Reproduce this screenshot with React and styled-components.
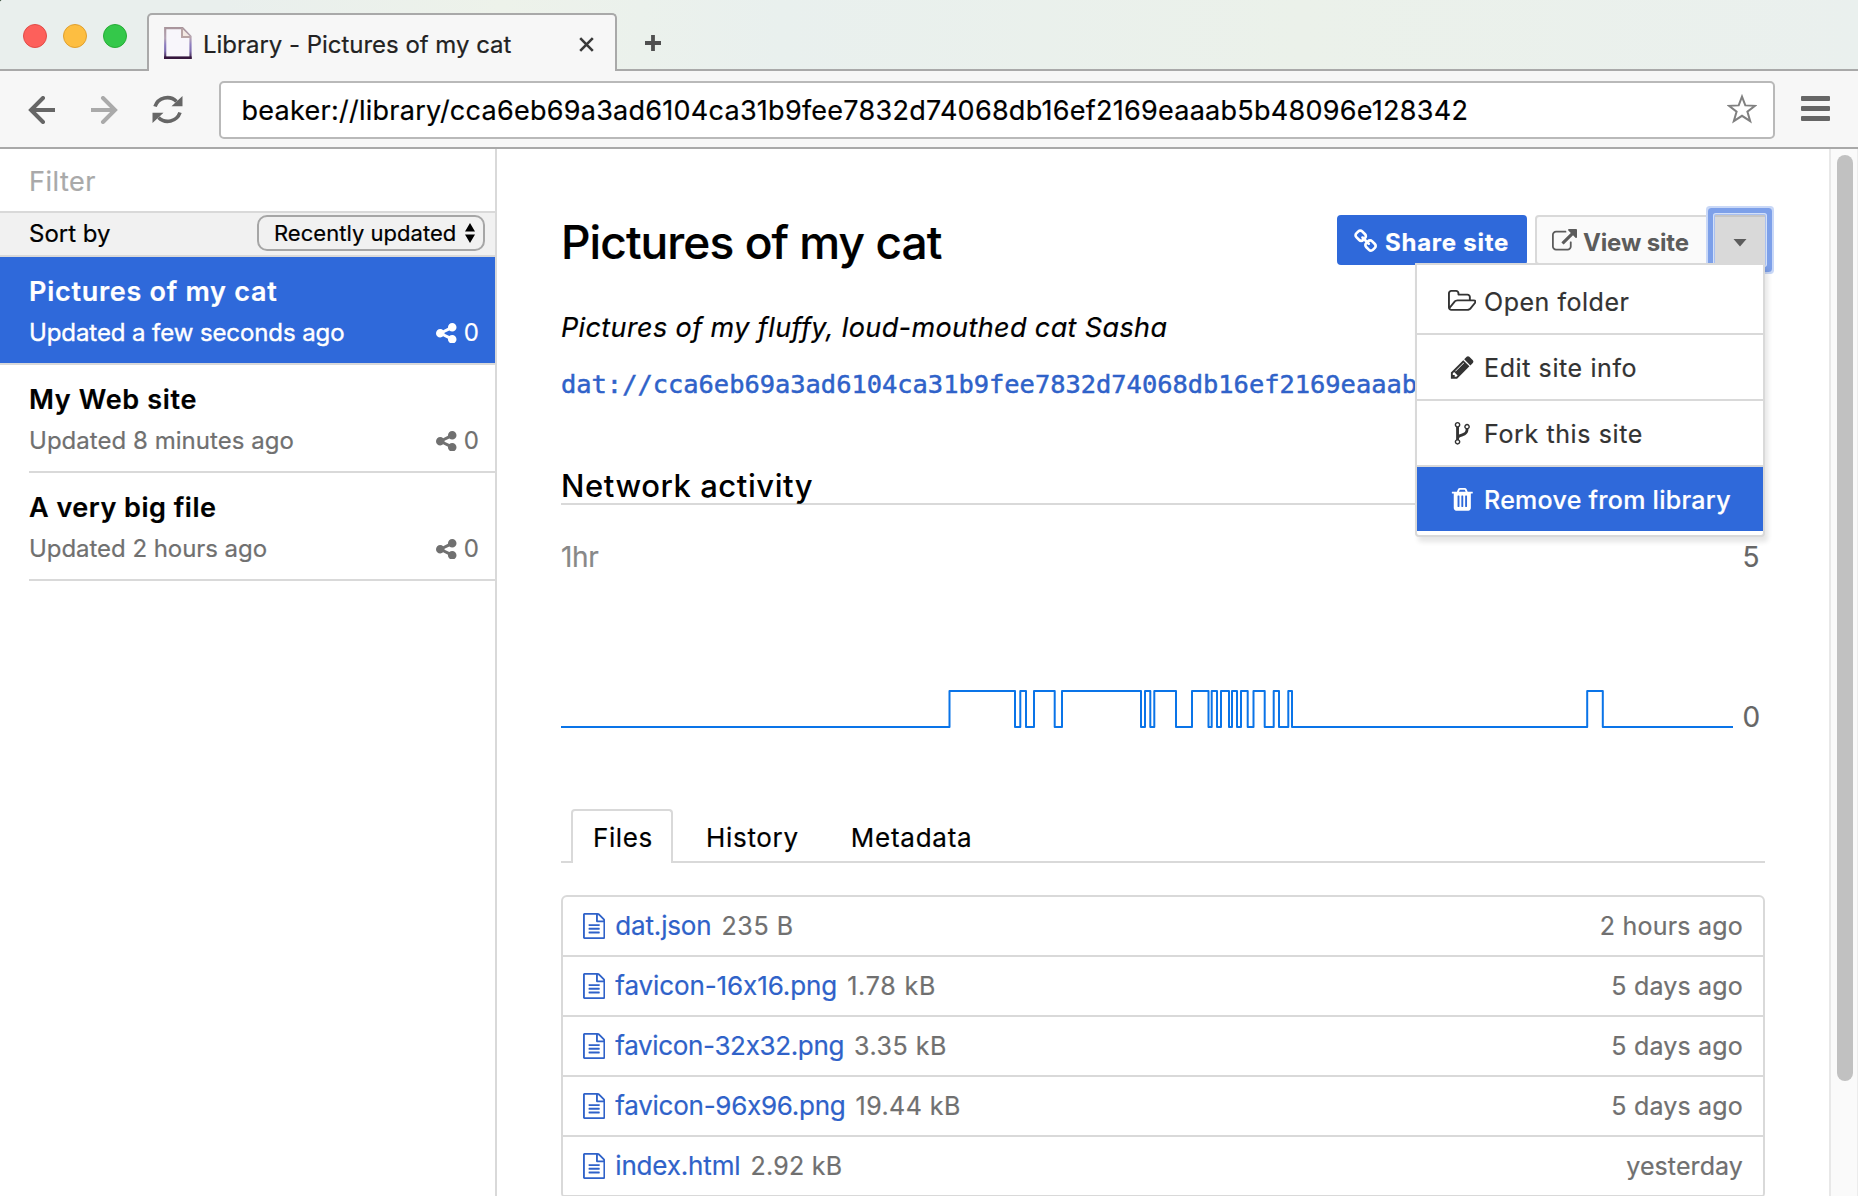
import React from 'react';
import styled, { createGlobalStyle } from 'styled-components';

const BLUE = '#2f69da';
const LINE = '#d9d9d9';

const GlobalStyle = createGlobalStyle`
  * { box-sizing: border-box; }
  html, body { margin: 0; padding: 0; background: #2c4530; overflow: hidden; }
  body { font-family: Inter, "Liberation Sans", sans-serif; color: #000; }
`;

const Window = styled.div`
  width: 1858px;
  height: 1196px;
  display: flex;
  flex-direction: column;
  overflow: hidden;
  background: #fff;
  border-top-left-radius: 3px;
`;

const Text = styled.span`
  font-size: ${(p) => p.$size}px;
  font-weight: ${(p) => p.$weight || 400};
  line-height: ${(p) => p.$lh || 32}px;
  letter-spacing: ${(p) => p.$ls || 0}px;
  color: ${(p) => p.$color || 'inherit'};
  -webkit-text-stroke: ${(p) => p.$stroke ?? 0.2}px currentColor;
  white-space: nowrap;
`;

/* ---------- window chrome ---------- */

const TitleBar = styled.header`
  flex: none;
  height: 71px;
  display: flex;
  border-bottom: 2px solid #a9a9a9;
  background: linear-gradient(90deg, #e9efed 0%, #e9efed 12%, #edf2ea 27%, #e9f0ee 42%, #ebf1ea 70%, #eaf0ee 100%);
`;

const Lights = styled.div`
  width: 147px;
  display: flex;
  gap: 16px;
  padding: 24px 0 0 23px;
`;

const Light = styled.i`
  width: 24px;
  height: 24px;
  border-radius: 50%;
  background: ${(p) => p.$fill};
  border: 1px solid ${(p) => p.$edge};
`;

const BrowserTab = styled.div`
  width: 470px;
  height: 58px;
  margin-top: 13px;
  padding: 0 21px 0 15px;
  display: flex;
  align-items: center;
  background: #f7f7f7;
  border: 2px solid #a9a9a9;
  border-bottom: 0;
  border-radius: 5px 5px 0 0;
  color: #222;

  ${Text} { margin-left: 11px; padding-top: 3px; }
  svg:last-child { margin: 2px 0 0 auto; }
`;

const NewTab = styled.div`
  padding: 35px 0 0 28px;
`;

const Toolbar = styled.nav`
  flex: none;
  height: 78px;
  display: flex;
  align-items: center;
  background: #f7f7f7;
  border-bottom: 2px solid #a9a9a9;
`;

const NavButtons = styled.div`
  width: 219px;
  display: flex;
  align-items: center;
  padding: 1px 0 0 28px;
  gap: 35px;

  svg + svg { margin-left: -1px; }
`;

const AddressBar = styled.div`
  width: 1556px;
  height: 58px;
  display: flex;
  align-items: center;
  justify-content: space-between;
  padding: 0 16px 0 20.5px;
  background: #fff;
  border: 2px solid #b9b9b9;
  border-radius: 5px;
  margin-top: 1px;

  ${Text} { padding-top: 3px; }
  svg { margin-top: -2px; }
`;

const MenuButton = styled.div`
  width: 29px;
  margin: -1px 0 0 25.5px;
  display: flex;
  flex-direction: column;
  gap: 5px;
`;

const MenuBar = styled.i`
  height: 5px;
  border-radius: 1px;
  background: #666;
`;

/* ---------- layout ---------- */

const Body = styled.div`
  flex: 1;
  min-height: 0;
  display: flex;
`;

const Sidebar = styled.aside`
  width: 497px;
  flex: none;
  border-right: 2px solid ${LINE};
`;

const FilterRow = styled.div`
  height: 64px;
  padding: 17px 0 0 29px;
  border-bottom: 2px solid ${LINE};
`;

const SortRow = styled.div`
  height: 44px;
  display: flex;
  justify-content: space-between;
  padding: 2px 10px 0 29px;
  background: #f1f1f1;
  border-bottom: 2px solid ${LINE};
`;

const Select = styled.div`
  width: 228px;
  height: 36px;
  display: flex;
  align-items: center;
  justify-content: space-between;
  padding: 0 8px 0 15px;
  border: 2px solid #a6a6a6;
  border-radius: 10px;
`;

const Item = styled.div`
  height: 108px;
  margin-left: ${(p) => (p.$active ? 0 : 29)}px;
  padding: 18px 16px 0 ${(p) => (p.$active ? 29 : 0)}px;
  display: flex;
  flex-direction: column;
  gap: 8px;
  border-bottom: 2px solid ${LINE};
  background: ${(p) => (p.$active ? BLUE : 'none')};
  background-clip: padding-box;
  color: ${(p) => (p.$active ? '#fff' : '#000')};
`;

const ItemMeta = styled.div`
  display: flex;
  align-items: center;
  color: ${(p) => (p.$active ? '#fff' : '#707070')};

  svg { margin-left: auto; margin-right: 7px; }
`;

const Main = styled.main`
  width: 1332px;
  padding: 66px 64px 0 64px;
  overflow: hidden;
`;

const ScrollTrack = styled.div`
  flex: 1;
  padding: 6px 0 0 6px;
  border-left: 2px solid #e8e8e8;
  border-right: 1px solid #ececec;
  background: #fafafa;
`;

const ScrollThumb = styled.div`
  width: 16px;
  height: 926px;
  border-radius: 8px;
  background: #c1c1c1;
`;

/* ---------- page header ---------- */

const PageHeader = styled.div`
  position: relative;
  height: 50px;
  display: flex;
  justify-content: space-between;
`;

const Title = styled(Text).attrs({ as: 'h1' })`
  margin: 0;
`;

const Actions = styled.div`
  display: flex;
`;

const Button = styled.div`
  height: 50px;
  width: ${(p) => p.$width}px;
  margin-right: ${(p) => p.$gap || 0}px;
  display: flex;
  align-items: center;
  gap: 6px;
  padding: 2px 0 0 15px;
  border: 2px solid ${(p) => (p.$primary ? BLUE : LINE)};
  border-radius: 4px;
  background: ${(p) => (p.$primary ? BLUE : '#fafafa')};
  color: ${(p) => (p.$primary ? '#fff' : '#5c5c5c')};

  ${Text} { padding-top: 3px; }
`;

const CaretButton = styled.div`
  width: 50px;
  height: 50px;
  display: flex;
  align-items: center;
  justify-content: center;
  padding-top: 4px;
  background: #d9d9d9;
  border-top: 2px solid #c6c6c6;
  box-shadow: 0 0 0 1px #a9c0f0, 0 0 0 2px #d3e0f8, 0 0 0 7px #7da0e9, 0 0 0 9px #c9d8f7;
  border-radius: 1px;
`;

const Dropdown = styled.div`
  position: absolute;
  top: 48px;
  right: 0;
  width: 350px;
  padding: 4px 0;
  background: #fff;
  border: 2px solid ${LINE};
  border-radius: 0 0 4px 4px;
  box-shadow: 3px 5px 5px rgba(0, 0, 0, 0.1);
`;

const DropdownItem = styled.div`
  height: ${(p) => (p.$last ? 64 : 66)}px;
  display: flex;
  align-items: center;
  padding: 1px 0 0 28px;
  border-bottom: ${(p) => (p.$last ? 0 : 2)}px solid ${LINE};
  background: ${(p) => (p.$last ? BLUE : '#fff')};
  color: ${(p) => (p.$last ? '#fff' : '#333')};
`;

const IconCell = styled.span`
  width: 34px;
  margin-right: 5px;
  display: flex;
  justify-content: center;
`;

const Description = styled.p`
  margin: 43px 0 0;
  font-size: 27px;
  font-style: italic;
  line-height: 40px;
  letter-spacing: 0.38px;
  -webkit-text-stroke: 0.2px currentColor;
`;

const DatLink = styled.a`
  display: block;
  width: 854px;
  overflow: hidden;
  margin-top: 16px;
  font-family: "DejaVu Sans Mono", monospace;
  font-size: 25.4px;
  line-height: 40px;
  color: #2f62c9;
  -webkit-text-stroke: 0.5px currentColor;
  white-space: nowrap;
`;

const SectionTitle = styled.h2`
  margin: 63px 0 32px;
  height: 38px;
  font-size: 31px;
  font-weight: 500;
  line-height: 38px;
  letter-spacing: 0.56px;
  border-bottom: 2px solid ${LINE};
`;

/* ---------- chart ---------- */

const Chart = styled.div`
  height: 200px;
  display: flex;
`;

const Plot = styled.div`
  width: 1172px;
  display: flex;
  flex-direction: column;
`;

const Axis = styled.div`
  padding-left: 9.5px;
  display: flex;
  flex-direction: column;
  justify-content: space-between;
`;

/* ---------- tabs and files ---------- */

const Tabs = styled.div`
  height: 54px;
  margin-top: 72px;
  padding-left: 10px;
  display: flex;
  align-items: flex-start;
  border-bottom: 2px solid ${LINE};
`;

const Tab = styled.div`
  height: 54px;
  display: flex;
  align-items: center;
  padding: ${(p) => (p.$active ? '2px 19px 0 20px' : '4px 26px 0')};
  width: ${(p) => (p.$active ? '102px' : 'auto')};
  margin-right: ${(p) => (p.$active ? 7 : 0)}px;
  border: ${(p) => (p.$active ? `2px solid ${LINE}` : 0)};
  border-bottom: 0;
  border-radius: 4px 4px 0 0;
  background: ${(p) => (p.$active ? '#fff' : 'none')};
`;

const FileList = styled.div`
  margin-top: 32px;
  border: 2px solid ${LINE};
  border-radius: 6px;
`;

const FileRow = styled.div`
  height: 60px;
  display: flex;
  align-items: center;
  padding: 0 20px 0 20px;
  border-bottom: 2px solid ${LINE};
  color: #707070;

  svg { margin-right: 10px; color: #2f62c9; }
  ${Text}:nth-of-type(2) { margin-left: 10px; }
  ${Text}:last-child { margin-left: auto; }
`;

/* ---------- icons ---------- */

const GLYPHS = {
  link: ['0 0 1792 1792', 'M1456 1216q0-40-28-68l-208-208q-28-28-68-28-42 0-72 32 3 3 19 18.5t21.5 21.5 15 19 13 25.5 3.5 27.5q0 40-28 68t-68 28q-15 0-27.5-3.5t-25.5-13-19-15-21.5-21.5-18.5-19q-33 31-33 73 0 40 28 68l206 207q27 27 68 27 40 0 68-26l147-146q28-28 28-67zm-703-705q0-40-28-68l-206-207q-28-28-68-28-39 0-68 27l-147 146q-28 28-28 67 0 40 28 68l208 208q27 27 68 27 42 0 72-31-3-3-19-18.5t-21.5-21.5-15-19-13-25.5-3.5-27.5q0-40 28-68t68-28q15 0 27.5 3.5t25.5 13 19 15 21.5 21.5 18.5 19q33-31 33-73zm895 705q0 120-85 203l-147 146q-83 83-203 83-121 0-204-85l-206-207q-83-83-83-203 0-123 88-209l-88-88q-86 88-208 88-120 0-204-84l-208-208q-84-84-84-204t85-203l147-146q83-83 203-83 121 0 204 85l206 207q83 83 83 203 0 123-88 209l88 88q86-88 208-88 120 0 204 84l208 208q84 84 84 204z'],
  external: ['0 0 1792 1792', 'M1408 928v320q0 119-84.5 203.5t-203.5 84.5h-832q-119 0-203.5-84.5t-84.5-203.5v-832q0-119 84.5-203.5t203.5-84.5h704q14 0 23 9t9 23v64q0 14-9 23t-23 9h-704q-66 0-113 47t-47 113v832q0 66 47 113t113 47h832q66 0 113-47t47-113v-320q0-14 9-23t23-9h64q14 0 23 9t9 23zm384-864v512q0 26-19 45t-45 19-45-19l-176-176-652 652q-10 10-23 10t-23-10l-114-114q-10-10-10-23t10-23l652-652-176-176q-19-19-19-45t19-45 45-19h512q26 0 45 19t19 45z'],
  folder: ['-64 0 1920 1792', 'M1717 931q0-35-53-35h-1088q-40 0-85.5 21.5t-71.5 52.5l-294 363q-18 24-18 40 0 35 53 35h1088q40 0 86-22t71-53l294-363q18-22 18-39zm-1141-163h768v-160q0-40-28-68t-68-28h-576q-40 0-68-28t-28-68v-64q0-40-28-68t-68-28h-320q-40 0-68 28t-28 68v853l256-315q44-53 116-87.5t140-34.5zm1269 163q0 62-46 120l-295 363q-43 53-116 87.5t-140 34.5h-1088q-92 0-158-66t-66-158v-960q0-92 66-158t158-66h320q92 0 158 66t66 158v32h544q92 0 158 66t66 158v160h192q54 0 99 24.5t67 70.5q15 32 15 68z'],
  pencil: ['0 0 1792 1792', 'M491 1536l91-91-235-235-91 91v107h128v128h107zm523-928q0-22-22-22-10 0-17 7l-542 542q-7 7-7 17 0 22 22 22 10 0 17-7l542-542q7-7 7-17zm-54-192l416 416-832 832h-416v-416zm683 96q0 53-37 90l-166 166-416-416 166-165q36-38 90-38 53 0 91 38l235 234q37 39 37 91z'],
  fork: ['0 0 1792 1792', 'M672 1472q0-40-28-68t-68-28-68 28-28 68 28 68 68 28 68-28 28-68zm0-1152q0-40-28-68t-68-28-68 28-28 68 28 68 68 28 68-28 28-68zm640 128q0-40-28-68t-68-28-68 28-28 68 28 68 68 28 68-28 28-68zm96 0q0 52-26 96.5t-70 69.5q-2 287-226 414-68 38-203 81-128 40-169.5 71t-41.5 100v26q44 25 70 69.5t26 96.5q0 80-56 136t-136 56-136-56-56-136q0-52 26-96.5t70-69.5v-820q-44-25-70-69.5t-26-96.5q0-80 56-136t136-56 136 56 56 136q0 52-26 96.5t-70 69.5v497q54-26 154-57 55-17 87.5-29.5t70.5-31 59-39.5 40.5-51 28-69.5 8.5-91.5q-44-25-70-69.5t-26-96.5q0-80 56-136t136-56 136 56 56 136z'],
  trash: ['0 0 1792 1792', 'M704 1376v-704q0-14-9-23t-23-9h-64q-14 0-23 9t-9 23v704q0 14 9 23t23 9h64q14 0 23-9t9-23zm256 0v-704q0-14-9-23t-23-9h-64q-14 0-23 9t-9 23v704q0 14 9 23t23 9h64q14 0 23-9t9-23zm256 0v-704q0-14-9-23t-23-9h-64q-14 0-23 9t-9 23v704q0 14 9 23t23 9h64q14 0 23-9t9-23zm-544-992h448l-48-117q-7-9-17-11h-317q-10 2-17 11zm928 32v64q0 14-9 23t-23 9h-96v948q0 83-47 143.5t-113 60.5h-832q-66 0-113-58.5t-47-141.5v-952h-96q-14 0-23-9t-9-23v-64q0-14 9-23t23-9h309l70-167q15-37 54-63t79-26h320q40 0 79 26t54 63l70 167h309q14 0 23 9t9 23z'],
  share: ['128 128 1536 1536', 'M1344 1024q133 0 226.5 93.5t93.5 226.5-93.5 226.5-226.5 93.5-226.5-93.5-93.5-226.5q0-12 2-34l-360-180q-92 86-218 86-133 0-226.5-93.5t-93.5-226.5 93.5-226.5 226.5-93.5q126 0 218 86l360-180q-2-22-2-34 0-133 93.5-226.5t226.5-93.5 226.5 93.5 93.5 226.5-93.5 226.5-226.5 93.5q-126 0-218-86l-360 180q2 22 2 34t-2 34l360 180q92-86 218-86z'],
  file: ['128 0 1536 1792', 'M1596 380q28 28 48 76t20 88v1152q0 40-28 68t-68 28h-1344q-40 0-68-28t-28-68v-1600q0-40 28-68t68-28h896q40 0 88 20t76 48zm-444-244v376h376q-10-29-22-41l-313-313q-12-12-41-22zm384 1528v-1024h-416q-40 0-68-28t-28-68v-416h-768v1536h1280zm-1024-864q0-14 9-23t23-9h704q14 0 23 9t9 23v64q0 14-9 23t-23 9h-704q-14 0-23-9t-9-23v-64zm736 224q14 0 23 9t9 23v64q0 14-9 23t-23 9h-704q-14 0-23-9t-9-23v-64q0-14 9-23t23-9h704zm0 256q14 0 23 9t9 23v64q0 14-9 23t-23 9h-704q-14 0-23-9t-9-23v-64q0-14 9-23t23-9h704z'],
};

function Glyph({ name, w, h }) {
  const [box, d] = GLYPHS[name];
  return (
    <svg width={w} height={h || w} viewBox={box} fill="currentColor">
      <path d={d} />
    </svg>
  );
}

function Arrow({ color, flip }) {
  return (
    <svg width="28" height="28" viewBox="0 0 28 28" fill="none" stroke={color} strokeWidth="4">
      <g transform={flip ? 'matrix(-1 0 0 1 28 0)' : undefined}>
        <path d="M2.5 14H27" />
        <path d="M15 2L3 14l12 12" strokeLinecap="round" />
      </g>
    </svg>
  );
}

function PageIcon() {
  return (
    <svg width="28" height="32" viewBox="0 0 28 32">
      <defs>
        <linearGradient id="pageEdge" gradientUnits="userSpaceOnUse" x1="0" y1="0" x2="0" y2="32">
          <stop offset="0" stopColor="#a8949a" />
          <stop offset="0.35" stopColor="#b4a3b4" />
          <stop offset="0.55" stopColor="#8f7fc0" />
          <stop offset="0.75" stopColor="#7d6cae" />
          <stop offset="1" stopColor="#35163c" />
        </linearGradient>
      </defs>
      <path d="M1.2 1.2H18.5L26.5 9.5V30.8H1.2Z" fill="#f8f6fb" stroke="url(#pageEdge)" strokeWidth="2.2" />
      <path d="M0 30.8H27.6" stroke="#35163c" strokeWidth="2.4" />
      <path d="M18 1.5V10H26.5" fill="#f3e9e2" stroke="#b9a5a5" strokeWidth="2" />
    </svg>
  );
}

/* ---------- data ---------- */

const SITES = [
  { title: 'Pictures of my cat', tls: 0.73, sub: 'Updated a few seconds ago', sls: -0.09, active: true },
  { title: 'My Web site', tls: 0.67, sub: 'Updated 8 minutes ago', sls: 0.03 },
  { title: 'A very big file', tls: 0.5, sub: 'Updated 2 hours ago', sls: -0.05 },
];

const MENU = [
  { icon: 'folder', w: 28.5, h: 26.6, label: 'Open folder', ls: 0.53 },
  { icon: 'pencil', w: 26.6, label: 'Edit site info', ls: 0.6 },
  { icon: 'fork', w: 26.6, label: 'Fork this site', ls: 0.62 },
  { icon: 'trash', w: 26.6, label: 'Remove from library', ls: 0.28, last: true },
];

const FILES = [
  ['dat.json', -0.16, '235 B', 0.6, '2 hours ago', 0.21],
  ['favicon-16x16.png', -0.1, '1.78 kB', 0.8, '5 days ago', 0.18],
  ['favicon-32x32.png', -0.34, '3.35 kB', 0.53, '5 days ago', 0.18],
  ['favicon-96x96.png', -0.26, '19.44 kB', 0.45, '5 days ago', 0.18],
  ['index.html', -0.17, '2.92 kB', 0.25, 'yesterday', 0.1],
];

const EDGES = [
  388.5, 454, 459.3, 465, 473, 493.7, 501, 580, 584, 589.3, 593.3, 615, 631, 647.5, 650.7, 656,
  660, 668, 671, 676, 680, 686.7, 692.5, 703.7, 712.7, 718, 727.3, 731, 1026.2, 1041.8,
];

const KEY = 'cca6eb69a3ad6104ca31b9fee7832d74068db16ef2169eaaab5b48096e128342';

function activityPath() {
  let high = false;
  let d = 'M0 150';
  EDGES.forEach((x) => {
    high = !high;
    d += `H${x}V${high ? 114 : 150}`;
  });
  return `${d}H1172`;
}

export default function App() {
  return (
    <Window>
      <GlobalStyle />
      <TitleBar>
        <Lights>
          <Light $fill="#fd605b" $edge="#e14b47" />
          <Light $fill="#fdbe41" $edge="#e0a02f" />
          <Light $fill="#34c84a" $edge="#27ac36" />
        </Lights>
        <BrowserTab>
          <PageIcon />
          <Text $size={24} $ls={-0.03}>Library - Pictures of my cat</Text>
          <svg width="15" height="15" viewBox="0 0 15 15" stroke="#3a3a3a" strokeWidth="2.6">
            <path d="M1.2 1.2L13.8 13.8M13.8 1.2L1.2 13.8" />
          </svg>
        </BrowserTab>
        <NewTab>
          <svg width="16" height="16" viewBox="0 0 16 16" stroke="#505050" strokeWidth="3.8">
            <path d="M8 0V16M0 8H16" />
          </svg>
        </NewTab>
      </TitleBar>

      <Toolbar>
        <NavButtons>
          <Arrow color="#666" />
          <Arrow color="#aaa" flip />
          <svg width="31" height="31" viewBox="0 0 31 31" fill="none" stroke="#666" strokeWidth="3.6">
            <path d="M3 12.5A13 13 0 0 1 24.5 7.5" />
            <path d="M28 18.5A13 13 0 0 1 6.5 23.5" />
            <path d="M30.5 2V12.3H19.5Z M0.5 29V18.7H11.5Z" fill="#666" stroke="none" />
          </svg>
        </NavButtons>
        <AddressBar>
          <Text $size={27} $ls={0.26}>{`beaker://library/${KEY}`}</Text>
          <svg width="30" height="30" viewBox="0 0 30 30" fill="none" stroke="#808080" strokeWidth="2">
            <path d="M15 2.6L18.3 11.4L28 11.8L20.4 17.6L23.2 27.2L15 21.8L6.8 27.2L9.6 17.6L2 11.8L11.7 11.4Z" />
          </svg>
        </AddressBar>
        <MenuButton>
          <MenuBar />
          <MenuBar />
          <MenuBar />
        </MenuButton>
      </Toolbar>

      <Body>
        <Sidebar>
          <FilterRow>
            <Text $size={27} $ls={0.5} $color="#a9a9a9">Filter</Text>
          </FilterRow>
          <SortRow>
            <Text $size={24} $lh={38}>Sort by</Text>
            <Select>
              <Text $size={22} $ls={0.03}>Recently updated</Text>
              <svg width="10" height="20" viewBox="0 0 10 20">
                <path d="M5 0L10 8.5H0ZM5 20L10 11.5H0Z" />
              </svg>
            </Select>
          </SortRow>
          {SITES.map((s) => (
            <Item key={s.title} $active={s.active}>
              <Text $size={27} $weight={600} $ls={s.tls} $lh={34}>{s.title}</Text>
              <ItemMeta $active={s.active}>
                <Text $size={24} $ls={s.sls} $stroke={s.active ? 0.4 : 0.2}>{s.sub}</Text>
                <Glyph name="share" w={20.5} />
                <Text $size={24}>0</Text>
              </ItemMeta>
            </Item>
          ))}
        </Sidebar>

        <Main>
          <PageHeader>
            <Title $size={46} $weight={500} $ls={-0.925} $lh={54}>Pictures of my cat</Title>
            <Actions>
              <Button $primary $width={190} $gap={8}>
                <Glyph name="link" w={25} />
                <Text $size={24} $weight={700} $ls={0.75}>Share site</Text>
              </Button>
              <Button $width={180}>
                <Glyph name="external" w={25} />
                <Text $size={24} $weight={700} $ls={-0.15} $stroke={0}>View site</Text>
              </Button>
              <CaretButton>
                <svg width="14" height="8" viewBox="0 0 14 8" fill="#5c5c5c">
                  <path d="M0.5 0H13.5L7 7.6Z" />
                </svg>
              </CaretButton>
            </Actions>
            <Dropdown>
              {MENU.map((m) => (
                <DropdownItem key={m.label} $last={m.last}>
                  <IconCell>
                    <Glyph name={m.icon} w={m.w} h={m.h} />
                  </IconCell>
                  <Text $size={25} $weight={m.last ? 500 : 400} $ls={m.ls}>{m.label}</Text>
                </DropdownItem>
              ))}
            </Dropdown>
          </PageHeader>

          <Description>Pictures of my fluffy, loud-mouthed cat Sasha</Description>
          <DatLink>{`dat://${KEY}`}</DatLink>

          <SectionTitle>Network activity</SectionTitle>
          <Chart>
            <Plot>
              <Text $size={28} $ls={-0.35} $lh={40} $color="#888">1hr</Text>
              <svg width="1172" height="160" viewBox="0 0 1172 160" fill="none" stroke="#0a74e8" strokeWidth="2" strokeLinejoin="round">
                <path d={activityPath()} />
              </svg>
            </Plot>
            <Axis>
              <Text $size={28} $lh={40} $color="#666">5</Text>
              <Text $size={28} $lh={40} $color="#666">0</Text>
            </Axis>
          </Chart>

          <Tabs>
            <Tab $active>
              <Text $size={26} $ls={0.6}>Files</Text>
            </Tab>
            <Tab>
              <Text $size={26} $ls={0.68}>History</Text>
            </Tab>
            <Tab>
              <Text $size={26} $ls={0.76}>Metadata</Text>
            </Tab>
          </Tabs>

          <FileList>
            {FILES.map(([name, nls, size, sls, date, dls]) => (
              <FileRow key={name}>
                <Glyph name="file" w={22.3} h={26} />
                <Text $size={26} $ls={nls} $color="#2f62c9">{name}</Text>
                <Text $size={25} $ls={sls}>{size}</Text>
                <Text $size={25} $ls={dls}>{date}</Text>
              </FileRow>
            ))}
          </FileList>
        </Main>

        <ScrollTrack>
          <ScrollThumb />
        </ScrollTrack>
      </Body>
    </Window>
  );
}
